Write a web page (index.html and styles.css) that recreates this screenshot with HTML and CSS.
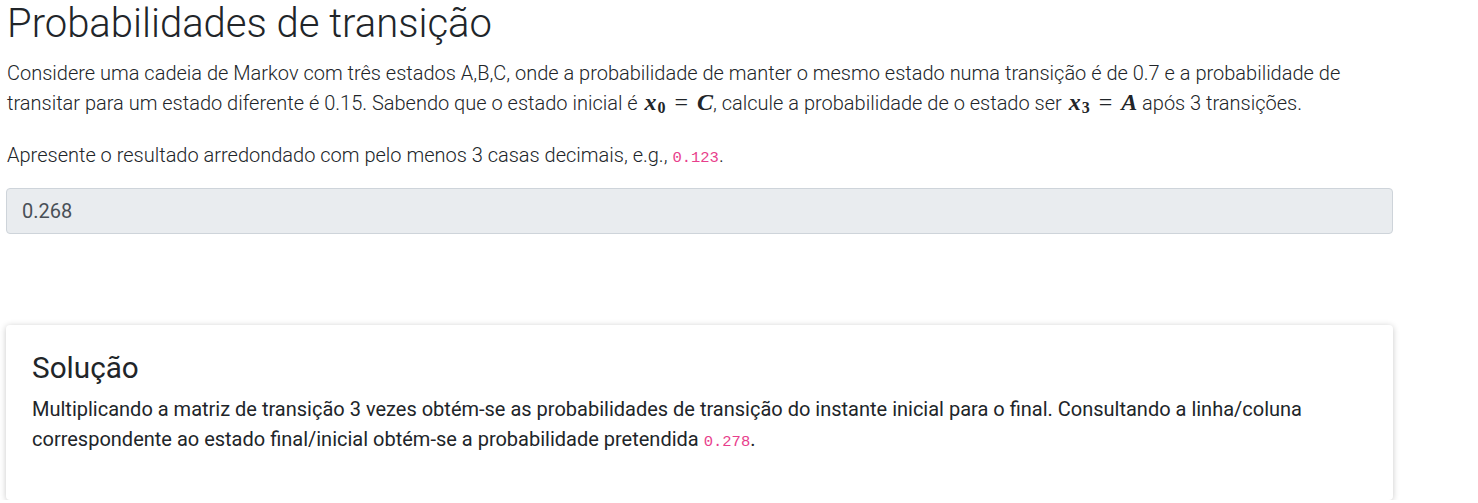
FILE: index.html
```html
<!DOCTYPE html>
<html lang="pt">
<head>
<meta charset="utf-8">
<title>Probabilidades de transição</title>
<link rel="stylesheet" href="styles.css">
</head>
<body>
<main class="page">
  <h1 class="title">Probabilidades de transição</h1>
  <p class="lead">Considere uma cadeia de Markov com três estados A,B,C, onde a probabilidade de manter o mesmo estado numa transição é de 0.7 e a probabilidade de transitar para um estado diferente é 0.15. Sabendo que o estado inicial é <span class="math">x<sub>0</sub><span class="op">=</span>C</span>, calcule a probabilidade de o estado ser <span class="math">x<sub>3</sub><span class="op">=</span>A</span> após 3 transições.</p>
  <p class="hint">Apresente o resultado arredondado com pelo menos 3 casas decimais, e.g., <code>0.123</code>.</p>
  <div class="answer">0.268</div>
  <section class="card">
    <h2 class="card-title">Solução</h2>
    <p class="card-text">Multiplicando a matriz de transição 3 vezes obtém-se as probabilidades de transição do instante inicial para o final. Consultando a linha/coluna correspondente ao estado final/inicial obtém-se a probabilidade pretendida <code>0.278</code>.</p>
  </section>
</main>
</body>
</html>
```
FILE: styles.css
```css
* { box-sizing: border-box; }
body {
  margin: 0;
  background: #fff;
  color: #212529;
  font-family: Roboto, "Noto Sans", sans-serif;
}
.page {
  padding: 0 0 0 6px;
  width: 1399px;
}
.title {
  margin: 0;
  font-size: 40px;
  font-weight: 300;
  line-height: 48px;
  padding-left: 1px;
}
.lead {
  margin: 10px 0 0;
  font-size: 20px;
  font-weight: 300;
  line-height: 30px;
  padding-left: 1px;
  padding-right: 20px;
}
.hint {
  margin: 22px 0 0;
  font-size: 20px;
  font-weight: 300;
  line-height: 30px;
  padding-left: 1px;
}
.math {
  font-family: "Liberation Serif", "DejaVu Serif", serif;
  font-weight: 700;
  font-style: italic;
  font-size: 24px;
  line-height: 0;
  white-space: nowrap;
  margin-left: 2px;
}
.math sub {
  font-size: 16px;
  font-style: normal;
  vertical-align: -3px;
  line-height: 0;
  margin-left: 1px;
}
.math .op {
  font-style: normal;
  font-weight: 400;
  margin: 0 9px;
}
code {
  font-family: "Liberation Mono", "DejaVu Sans Mono", monospace;
  font-size: 15.5px;
  line-height: 0;
  color: #e83e8c;
}
.answer {
  margin-top: 18px;
  width: 1387px;
  height: 46px;
  background: #e9ecef;
  border: 1px solid #ced4da;
  border-radius: 4px;
  padding: 0 15px;
  display: flex;
  align-items: center;
  font-size: 20px;
  font-weight: 400;
  color: #495057;
}
.card {
  margin-top: 91px;
  width: 1387px;
  height: 175px;
  background: #fff;
  border-radius: 4px;
  box-shadow: 0 1px 6px rgba(0,0,0,0.22);
  padding: 25px 26px 0 26px;
}
.card-title {
  margin: 0;
  font-size: 29.7px;
  font-weight: 400;
  line-height: 36px;
}
.card-text {
  margin: 9px 0 0;
  font-size: 20px;
  font-weight: 400;
  line-height: 29.5px;
}
```
